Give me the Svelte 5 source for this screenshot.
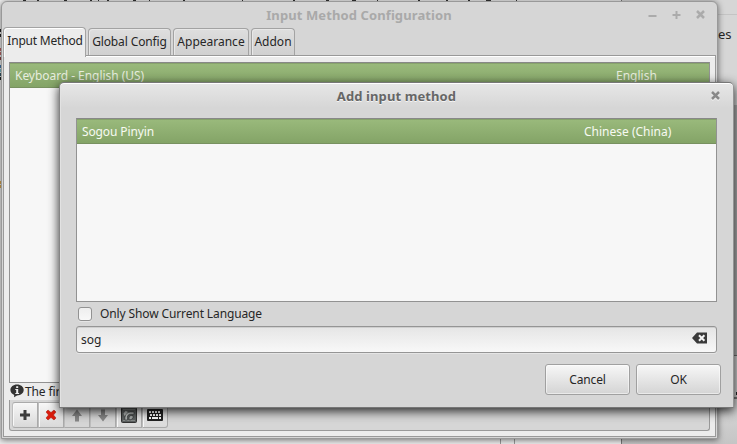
<script>
  const tabs = [
    { label: 'Input Method', width: 83 },
    { label: 'Global Config', width: 83 },
    { label: 'Appearance', width: 76 },
    { label: 'Addon', width: 44 }
  ];
  let active = $state(0);
  let query = $state('sog');
  let only = $state(false);
  const specks = [[23, 3], [37, 2], [64, 3], [90, 2], [98, 1], [107, 2], [133, 3], [149, 1], [183, 2], [242, 1], [293, 2], [326, 3], [352, 4], [377, 1], [418, 2], [446, 2], [468, 2], [486, 5], [516, 1]];
  const edges = [[29, '#222'], [34, '#222'], [48, '#b66'], [52, '#b66'], [57, '#844'], [65, '#47a'], [69, '#7bc'], [73, '#356'], [77, '#222'], [181, '#d5a550'], [185, '#d5a550']];
</script>

{#snippet cross()}
  <svg width="9" height="9" viewBox="0 0 9 9"><path d="M1 1 8 8M8 1 1 8" fill="none" stroke="currentColor" stroke-width="2.500" /></svg>
{/snippet}

<div class="desktop">
  {#each specks as [x, w]}<i class="speck" style="left:{x}px;width:{w}px"></i>{/each}
  {#each edges as [y, c]}<i class="edge" style="top:{y}px;background:{c}"></i>{/each}
  <div class="side"><span>es</span><i class="pane"></i><b></b></div>
  <i class="rule r1"></i><i class="rule r2"></i>

  <section class="window main">
    <header>
      <h1>Input Method Configuration</h1>
      <div class="controls">
        <svg width="9" height="9" viewBox="0 0 9 9"><path d="M.5 6h8" stroke="currentColor" stroke-width="2" /></svg>
        <svg width="9" height="9" viewBox="0 0 9 9"><path d="M.5 5h8M4.500 1v8" stroke="currentColor" stroke-width="2" /></svg>
        {@render cross()}
      </div>
    </header>
    <nav>
      {#each tabs as tab, i}
        <button class="tab" class:active={active === i} style="width:{tab.width}px" onclick={() => (active = i)}>{tab.label}</button>
      {/each}
    </nav>
    <div class="panel">
      <div class="list"><div class="row"><span>Keyboard - English (US)</span><span class="lang">English</span></div></div>
      <div class="hint">
        <svg width="14" height="14" viewBox="0 0 14 14"><path d="M7 .5c3.900 0 6.700 2.400 6.700 5.500S10.900 11.400 7 11.400L4 13.300 4.200 10.900C1.900 10.100.4 8.300.4 6 .4 2.900 3.200.5 7 .5Z" fill="#333" /><path d="M6.200 2.200h2v1.700h-2zM5.300 5h2.900v4h.9v1H5.300V9h.9V6h-.9z" fill="#eee" /></svg>
        <span>The first input method will be inactive state.</span>
      </div>
      <div class="toolbar">
        <button aria-label="Add"><svg width="12" height="12" viewBox="0 0 12 12"><path d="M4.500 1h3v3.500H11v3H7.500V11h-3V7.500H1v-3h3.500z" fill="#3b3b3b" /></svg></button>
        <button aria-label="Remove"><svg width="12" height="12" viewBox="0 0 12 12"><path d="M1 3 3 1l3 2.500L9 1l2 2-2.500 3L11 9l-2 2-3-2.500L3 11 1 9l2.500-3z" fill="#dc1c0c" stroke="#a71508" stroke-width=".5" /></svg></button>
        <button aria-label="Up" class="dim"><svg width="12" height="13" viewBox="0 0 12 13"><path d="M6 .5 11 7H8v5.500H4V7H1z" fill="#868686" /></svg></button>
        <button aria-label="Down" class="dim"><svg width="12" height="13" viewBox="0 0 12 13"><path d="M6 12.500 11 6H8V.5H4V6H1z" fill="#868686" /></svg></button>
        <button aria-label="Configure"><svg width="16" height="16" viewBox="0 0 16 16"><rect x=".5" y=".5" width="15" height="15" rx="1" fill="#5c6060" stroke="#333" /><path d="M2 2.500h12M2 13.500h12" stroke="#858988" /><path d="M4 13v-2.500C4 7 6.500 5 9.500 5H13v2.200H9.800C7.500 7.200 6.300 8.600 6.300 10.500V13z" fill="#c3c7c6" stroke="#303333" stroke-width=".7" /><path d="M8 12.800v-2c0-1.400 1-2.300 2.300-2.300H12v2.300l-2 2z" fill="#a3a7a6" stroke="#303333" stroke-width=".7" /><path d="m2.500 6.500 2.200-2.700 2.200 1.200-3.400 4z" fill="#b3b7b6" /></svg></button>
        <button aria-label="Keyboard"><svg width="16" height="12" viewBox="0 0 16 12"><rect width="16" height="12" rx="1" fill="#222" /><path d="M2 3h12M3 6h11" stroke="#fff" stroke-width="2" stroke-dasharray="2 1" /><path d="M2 9h2m1 0h6m1 0h2" stroke="#fff" stroke-width="2" /></svg></button>
      </div>
    </div>
  </section>

  <section class="window dialog">
    <header><h1>Add input method</h1><div class="controls">{@render cross()}</div></header>
    <div class="body">
      <div class="list"><div class="row"><span>Sogou Pinyin</span><span class="lang">Chinese (China)</span></div></div>
      <label><input type="checkbox" bind:checked={only} /><span>Only Show Current Language</span></label>
      <div class="entry">
        <input type="text" bind:value={query} aria-label="Search" />
        <svg width="16" height="12" viewBox="0 0 16 12"><path d="M0 6 5 .5h10v11H5z" fill="#3a3a3a" /><path d="m7 3.200 5.400 5.600m0-5.600L7 8.800" stroke="#f5f5f5" stroke-width="2" /></svg>
      </div>
      <footer><button>Cancel</button><button>OK</button></footer>
    </div>
  </section>
</div>

<style>
  * { box-sizing: border-box; }
  :global(body) { margin: 0; overflow: hidden; }
  .desktop { position: relative; width: 737px; height: 444px; overflow: hidden; background: #ededed; font: 12px/16px "Noto Sans", "Open Sans", sans-serif; letter-spacing: -.12px; color: #262626; }
  button, input { font: inherit; letter-spacing: inherit; color: inherit; padding: 0; margin: 0; }
  svg { display: block; flex: none; }
  .speck { position: absolute; top: 0; height: 1px; background: #333; }
  .edge { position: absolute; left: 0; width: 1px; height: 3px; }
  .side { position: absolute; left: 621px; top: 0; width: 116px; height: 444px; border-left: 1px solid #777; background: linear-gradient(#d6d6d6 0 355px, #6f6f6f 355px 356px, #d0d0d0 356px 397px, #777 397px 399px, #d8d8d8 399px, #c5c5c5 444px); }
  .side::before { content: ''; position: absolute; top: 14px; left: 0; right: 0; height: 1px; background: #c4c4c4; }
  .side span { position: absolute; left: 96px; top: 26px; font-size: 13px; letter-spacing: 0; }
  .pane { position: absolute; right: 0; top: 105px; width: 4px; height: 250px; background: #b0b0b0; }
  .side b { position: absolute; right: 0; top: 392px; width: 1px; height: 3px; background: #222; }
  .rule { position: absolute; top: 439px; height: 5px; width: 1px; background: #999; }
  .r1 { left: 500px; }
  .r2 { left: 514px; }
  .window { position: absolute; background: #d6d6d6; border: 1px solid #999; display: flex; flex-direction: column; }
  header { position: relative; flex: none; display: flex; justify-content: center; }
  h1 { margin: 0; font-size: 13px; line-height: 18px; font-weight: 700; letter-spacing: .1px; white-space: nowrap; }
  .controls { position: absolute; display: flex; gap: 15px; }
  .main { left: 1px; top: 1px; width: 717px; height: 438px; padding: 0 1px 1px; border-radius: 6px 6px 0 0; box-shadow: 0 1px 6px rgba(0, 0, 0, .55); }
  .main header { height: 25px; padding: 4px 1px 0 0; color: #a9a9a9; }
  .main .controls { right: 11px; top: 8px; color: #ababab; }
  nav { display: flex; align-items: flex-end; gap: 2px; height: 28px; flex: none; position: relative; z-index: 1; }
  .tab { height: 27px; border: 1px solid #a3a3a3; border-bottom: 0; border-radius: 4px 4px 0 0; background: linear-gradient(#dedede, #d0d0d0); box-shadow: inset 1px 1px #e8e8e8; white-space: nowrap; }
  .tab:nth-child(n + 3) { letter-spacing: 0; }
  .tab.active { height: 30px; margin-bottom: -2px; padding: 0 0 3px 1px; letter-spacing: -.2px; background: #ececec; box-shadow: inset 1px 1px #fff; }
  .panel { flex: 1; border: 1px solid #999; background: #ececec; box-shadow: inset 0 1px #fff; padding: 6px 5px 5px; display: flex; flex-direction: column; }
  .list { border: 1px solid #929292; border-top-color: #888; background: #f7f7f7; }
  .main .list { height: 321px; flex: none; }
  .row { display: flex; height: 25px; line-height: 24px; padding: 1px 0 0 5px; background: linear-gradient(#9aba7c, #84a467); border-bottom: 1px solid #789160; box-shadow: inset 0 1px #87a36c; color: #f7faf2; white-space: nowrap; }
  .row span:first-child { flex: 1; }
  .main .row { color: #e7eddf; letter-spacing: -.05px; }
  .main .lang { width: 93px; }
  .lang { letter-spacing: 0; }
  .hint { display: flex; height: 17px; gap: 1px; padding: 1px 0 0 1px; line-height: 16px; white-space: nowrap; }
  .toolbar { flex: 1; display: flex; padding: 2px; border: 1px solid #999; border-top: 0; border-radius: 0 0 3px 3px; background: #d6d6d6; }
  .toolbar button { width: 26px; height: 26px; display: flex; align-items: center; justify-content: center; border: 1px solid #aaa; border-left-color: #bdbdbd; background: linear-gradient(#f7f7f7, #d9d9d9); box-shadow: inset 1px 1px #f8f8f8; }
  .toolbar button:first-child { border-radius: 3px 0 0 3px; }
  .toolbar button:last-child { border-radius: 0 3px 3px 0; }
  .toolbar .dim { background: #d5d5d5; box-shadow: none; }
  .dialog { left: 59px; top: 82px; width: 675px; height: 326px; border-color: #777 #949494 #777 #858585; border-radius: 5px 5px 0 0; background: linear-gradient(#e7e7e7, #d6d6d6 25px); box-shadow: inset 0 1px #fff, inset 1px 0 #e2e2e2, 0 3px 11px rgba(0, 0, 0, .85); }
  .dialog header { height: 35px; padding-top: 4px; color: #666; text-shadow: 0 1px #f5f5f5; }
  .dialog .controls { right: 13px; top: 8px; color: #898989; filter: drop-shadow(0 1px #f3f3f3); }
  .body { padding: 0 16px; }
  .dialog .list { height: 184px; }
  .dialog .lang { width: 132px; }
  label { display: flex; align-items: center; gap: 8px; height: 24px; padding-left: 2px; }
  input[type='checkbox'] { appearance: none; width: 14px; height: 14px; border: 1px solid #929292; border-radius: 3px; background: linear-gradient(#eee, #f8f8f8); box-shadow: 0 1px #e5e5e5; }
  .entry { display: flex; align-items: center; height: 27px; border: 1px solid #959595; border-radius: 3px; background: linear-gradient(#e5e5e5, #f8f8f8); box-shadow: 0 1px #e5e5e5, inset 0 1px #cfcfcf; padding: 0 8px 0 4px; }
  .entry input { flex: 1; border: 0; outline: 0; background: none; letter-spacing: 0; }
  .entry svg { margin-bottom: 3px; }
  footer { display: flex; justify-content: flex-end; gap: 6px; margin: 11px -4px 0 0; }
  footer button { width: 85px; height: 31px; border: 1px solid #a0a0a0; border-radius: 3px; background: linear-gradient(#f7f7f7, #d4d4d4); box-shadow: inset 0 0 0 1px rgba(255, 255, 255, .5); }
</style>
